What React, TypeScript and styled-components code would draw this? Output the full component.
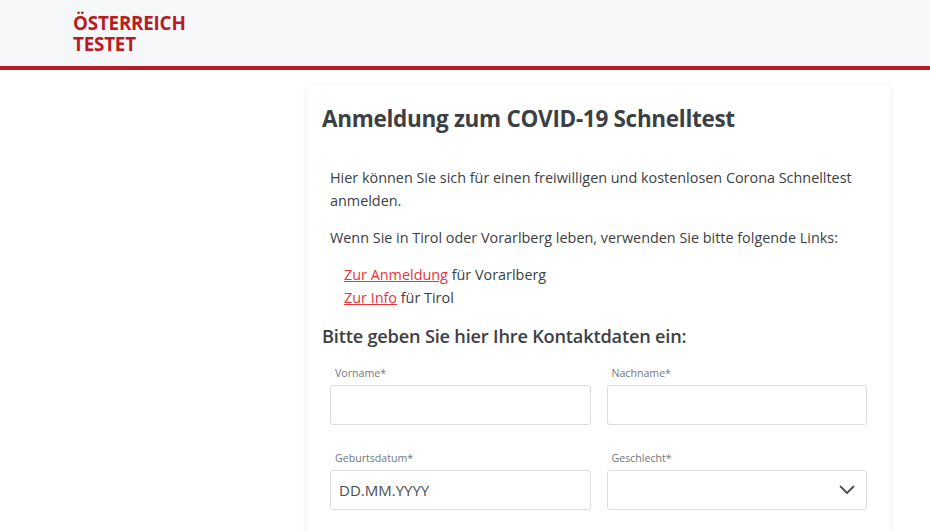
import styled, { createGlobalStyle } from 'styled-components';

const Global = createGlobalStyle`
  body {
    margin: 0;
    background: #fff;
    font-family: "Open Sans", "Noto Sans", sans-serif;
    color: #3c4043;
  }
`;

export default function App() {
  return <>
    <Global />
    <Header>
      <Logo>
        <span>ÖSTERREICH</span>
        <span>TESTET</span>
      </Logo>
    </Header>
    <Main>
      <Card>
        <Title>Anmeldung zum COVID-19 Schnelltest</Title>
        <Intro>
          <p>Hier können Sie sich für einen freiwilligen und kostenlosen Corona Schnelltest anmelden.</p>
          <p>Wenn Sie in Tirol oder Vorarlberg leben, verwenden Sie bitte folgende Links:</p>
          <Links>
            <div><a href="#">Zur Anmeldung</a> für Vorarlberg</div>
            <div><a href="#">Zur Info</a> für Tirol</div>
          </Links>
        </Intro>
        <SubTitle>Bitte geben Sie hier Ihre Kontaktdaten ein:</SubTitle>
        <FormGrid>
          <Field>
            <Label>Vorname*</Label>
            <Input />
          </Field>
          <Field>
            <Label>Nachname*</Label>
            <Input />
          </Field>
          <Field>
            <Label>Geburtsdatum*</Label>
            <Input placeholder="DD.MM.YYYY" />
          </Field>
          <Field>
            <Label>Geschlecht*</Label>
            <SelectBox>
              <svg width="16" height="10" viewBox="0 0 16 10" fill="none">
                <path d="M1.5 1.5 L8 8 L14.5 1.5" stroke="#4a4f55" strokeWidth="1.8" strokeLinecap="round" strokeLinejoin="round" />
              </svg>
            </SelectBox>
          </Field>
        </FormGrid>
      </Card>
    </Main>
  </>;
}

const Header = styled.header`
  height: 66px;
  background: #f6f7f9;
  border-bottom: 4px solid #b81c22;
  box-sizing: content-box;
  padding-left: 73px;
  display: flex;
  align-items: center;
`;

const Logo = styled.div`
  display: flex;
  flex-direction: column;
  color: #b81c22;
  font-weight: 700;
  font-size: 18.8px;
  line-height: 21px;
  letter-spacing: -0.2px;
  margin-top: 2px;
  span {
    display: block;
    line-height: 21px;
    height: 21px;
    overflow: visible;
  }
`;

const Main = styled.main`
  padding: 15px 40px 0 307px;
`;

const Card = styled.section`
  width: 583px;
  box-sizing: border-box;
  background: #fff;
  border-radius: 6px;
  box-shadow: 0 1px 6px rgba(0, 0, 0, 0.08);
  padding: 19px 15px 30px;
`;

const Title = styled.h1`
  margin: 0;
  font-size: 22.5px;
  font-weight: 700;
  color: #3c4043;
  letter-spacing: -0.3px;
  line-height: 30px;
`;

const Intro = styled.div`
  padding: 32px 8px 0;
  font-size: 14.4px;
  line-height: 23px;
  color: #3c4043;
  p {
    margin: 0 0 14px;
  }
`;

const Links = styled.div`
  padding-left: 14px;
  margin-top: 1px;
  a {
    color: #e8333a;
    text-decoration: underline;
  }
`;

const SubTitle = styled.h2`
  margin: 13px 0 0;
  font-size: 18.2px;
  font-weight: 600;
  color: #3c4043;
  letter-spacing: -0.2px;
  line-height: 28px;
`;

const FormGrid = styled.div`
  display: grid;
  grid-template-columns: 1fr 1fr;
  column-gap: 16px;
  row-gap: 25px;
  padding: 15px 8px 0;
`;

const Field = styled.div`
  display: flex;
  flex-direction: column;
`;

const Label = styled.label`
  font-size: 10.6px;
  color: #73777c;
  padding-left: 5px;
  line-height: 16px;
  margin-bottom: 4px;
`;

const Input = styled.input`
  height: 40px;
  box-sizing: border-box;
  border: 1px solid #dadde1;
  border-radius: 3px;
  padding: 0 8px;
  font-family: inherit;
  font-size: 15px;
  color: #3c4043;
  outline: none;
  &::placeholder {
    color: #4a4f55;
  }
`;

const SelectBox = styled.div`
  height: 40px;
  box-sizing: border-box;
  border: 1px solid #dadde1;
  border-radius: 3px;
  display: flex;
  align-items: center;
  justify-content: flex-end;
  padding-right: 11px;
`;
